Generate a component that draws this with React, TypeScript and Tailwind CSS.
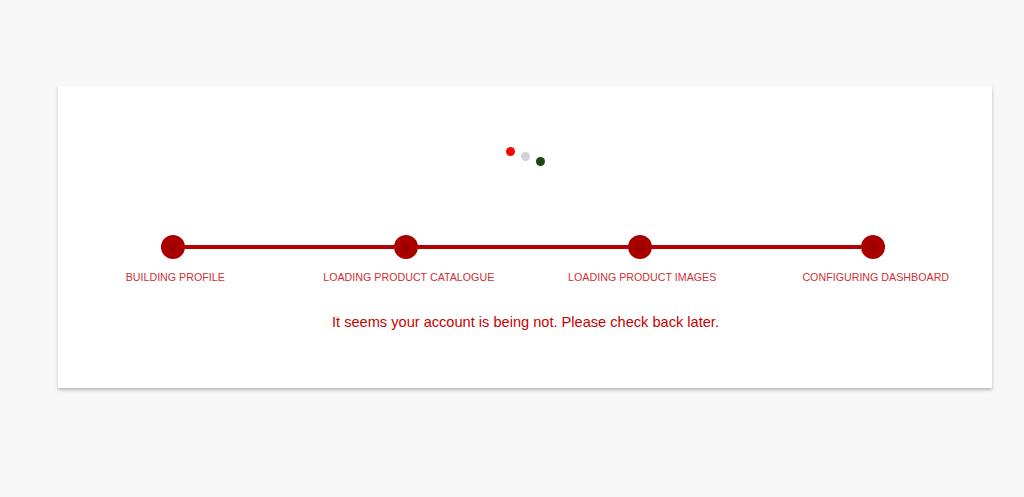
const steps = [
  'BUILDING PROFILE',
  'LOADING PRODUCT CATALOGUE',
  'LOADING PRODUCT IMAGES',
  'CONFIGURING DASHBOARD',
]

function Step({ label, first, last }: { label: string; first: boolean; last: boolean }) {
  return (
    <div className="flex flex-col items-center">
      <div className="flex w-full items-center">
        <div className={`h-[4px] flex-1 ${first ? 'bg-transparent' : 'bg-[#b40000]'}`} />
        <div className="flex h-[24px] w-[24px] items-center justify-center rounded-full bg-[#aa0000]">
          <div className="h-[8px] w-[8px] rounded-full bg-[#9a0000]" />
        </div>
        <div className={`h-[4px] flex-1 ${last ? 'bg-transparent' : 'bg-[#b40000]'}`} />
      </div>
      <div className="mt-[11px] pl-[5px] text-[10.7px] leading-[14px] text-[#d03036]">{label}</div>
    </div>
  )
}

export default function App() {
  return (
    <div className="min-h-[497px] bg-[#f7f7f7] pt-[86px] font-['Liberation_Sans',Arial,sans-serif]">
      <div className="ml-[58px] h-[302px] w-[934px] bg-white shadow-[0_2px_3px_rgba(0,0,0,0.25)]">
        <div className="flex h-[149px] items-start justify-center pt-[61px]">
          <div className="flex items-start gap-[6px]">
            <div className="h-[9px] w-[9px] rounded-full bg-[#ff0000]" />
            <div className="mt-[5px] h-[9px] w-[9px] rounded-full bg-[#d2d2da]" />
            <div className="mt-[10px] h-[9px] w-[9px] rounded-full bg-[#1a4a12]" />
          </div>
        </div>
        <div className="-ml-[2px] grid w-[934px] grid-cols-4">
          {steps.map((s, i) => (
            <Step key={s} label={s} first={i === 0} last={i === steps.length - 1} />
          ))}
        </div>
        <div className="mt-[29px] pl-[1px] text-center text-[14.6px] leading-[18px] text-[#c80000]">
          It seems your account is being not. Please check back later.
        </div>
      </div>
    </div>
  )
}
